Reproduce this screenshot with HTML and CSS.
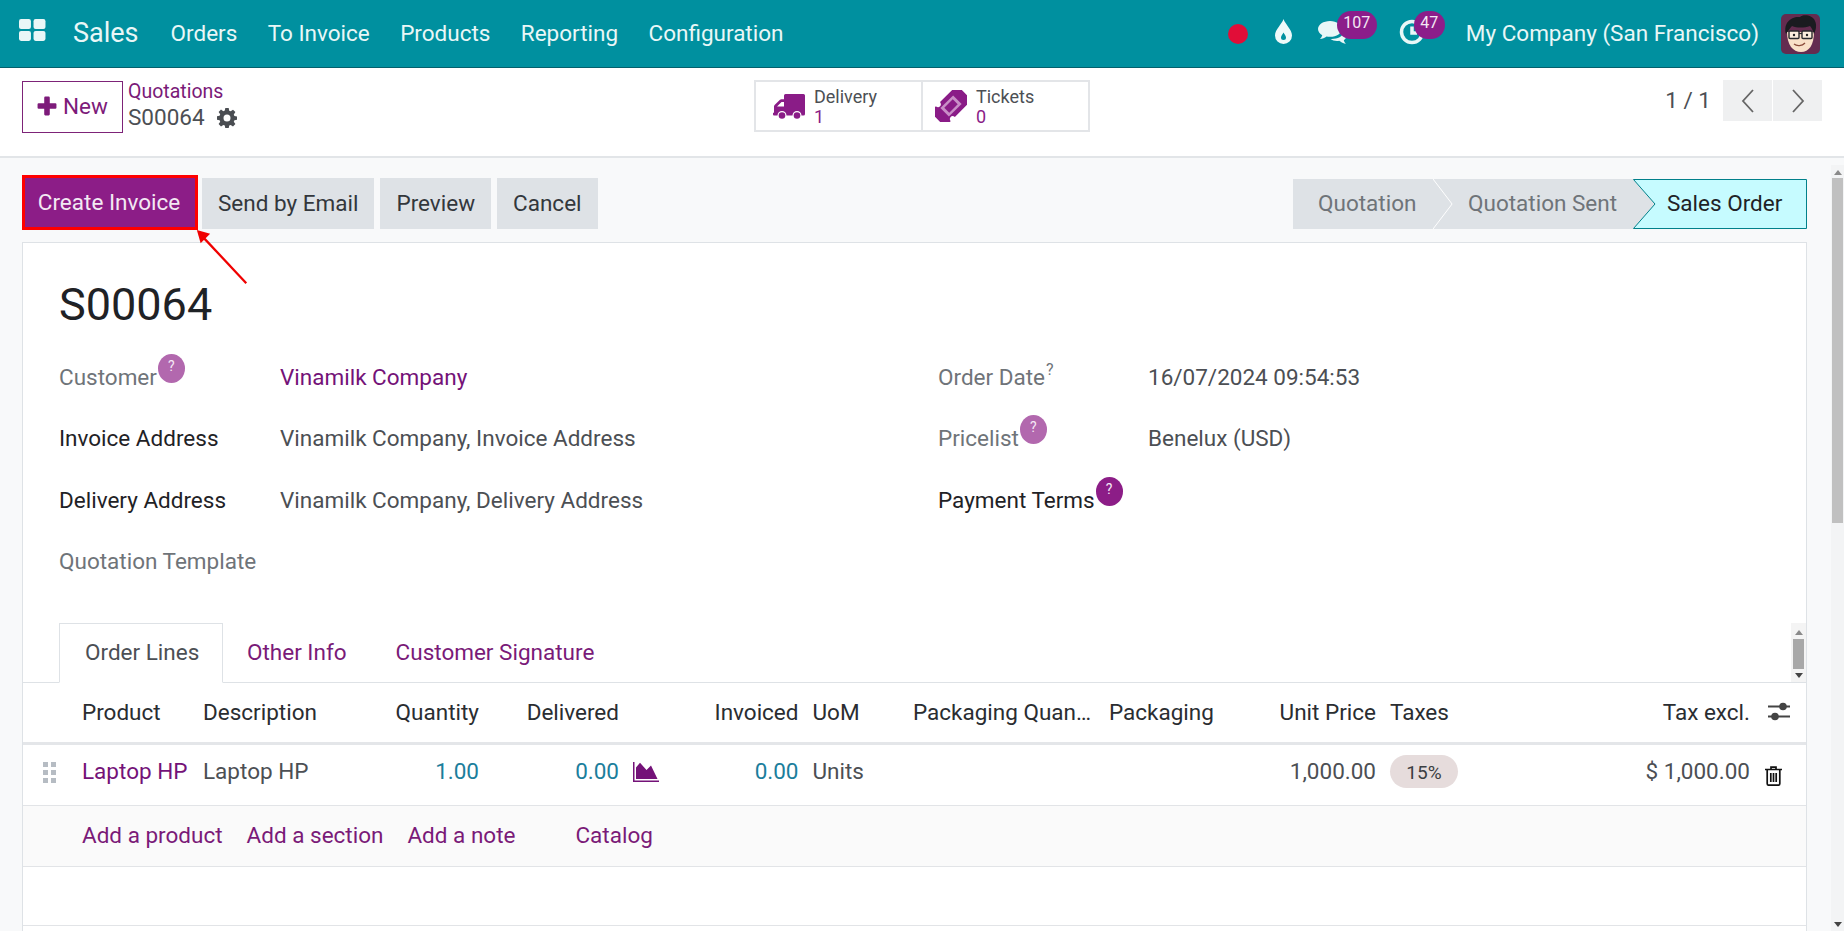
FILE: index.html
```html
<!DOCTYPE html>
<html lang="en">
<head>
<meta charset="utf-8">
<title>S00064 - Sales</title>
<link rel="stylesheet" href="styles.css">
</head>
<body>
<header class="navbar">
  <svg class="apps" viewBox="0 0 26 21"><rect x="0" y="0" width="11.5" height="9.5" rx="2"/><rect x="14" y="0" width="11.5" height="9.5" rx="2"/><rect x="0" y="11.5" width="11.5" height="9.5" rx="2"/><rect x="14" y="11.5" width="11.5" height="9.5" rx="2"/></svg>
  <span class="brand">Sales</span>
  <nav class="menu"><a>Orders</a><a>To Invoice</a><a>Products</a><a>Reporting</a><a>Configuration</a></nav>
  <div class="systray">
    <span class="rec"></span>
    <svg class="drop" viewBox="0 0 17 25"><path d="M8.5 0C10 5 17 10.500 17 16.500A8.500 8.500 0 0 1 0 16.500C0 10.500 7 5 8.500 0Z"/><path class="cut" d="M8.500 13.500c.8 2 2.500 3.200 2.500 5a2.500 2.500 0 0 1-5 0c0-1.800 1.700-3 2.500-5Z"/></svg>
    <span class="tray-item chat">
      <svg class="chat-ico" viewBox="0 0 29 23"><path d="M12 0C5.400 0 0 3.600 0 8c0 2.500 1.700 4.700 4.300 6.200-.4 1.400-1.200 2.600-2.300 3.800 2.400-.3 4.700-1.200 6.500-2.600 1.100.2 2.300.4 3.500.4 6.600 0 12-3.500 12-7.800S18.600 0 12 0Z"/><path d="M25.800 11.500c-1.200 3.700-6 6.500-12 6.500l-1.300-.1c1.600 1.300 3.900 2 6.500 2 .8 0 1.500 0 2.200-.2 1.400 1.100 3.300 2.500 6.800 3.300-1-1-1.900-2.400-2.200-3.800 1.600-1.200 2.700-2.700 2.700-4.500 0-1.100-1-2.100-2.700-3.200Z"/></svg>
      <b class="badge badge-wide">107</b>
    </span>
    <span class="tray-item clock">
      <svg class="clock-ico" viewBox="0 0 26 26"><circle cx="13" cy="13" r="10.500"/><path d="M13 7.500V14H18"/></svg>
      <b class="badge">47</b>
    </span>
    <span class="company">My Company (San Francisco)</span>
    <svg class="avatar" viewBox="0 0 39 40">
      <rect width="39" height="40" rx="5" fill="#642c50"/>
      <path d="M6 18c0 13 6 20 14 20s13-7 13-20Z" fill="#f9e0c8"/>
      <path d="M5 20C2 9 10 2 19 3c3-3 13-2 15 4 2 4 1 9-1 13-1-3-2-6-4-8-6 2-13 2-18 0-2 2-4 5-6 8Z" fill="#1a1b20"/>
      <rect x="8" y="17" width="10" height="7.500" rx="1" fill="#fbeede" stroke="#2a2a2e" stroke-width="1.400"/>
      <rect x="21" y="17" width="10" height="7.500" rx="1" fill="#fbeede" stroke="#2a2a2e" stroke-width="1.400"/>
      <path d="M18 19.500h3" stroke="#2a2a2e" stroke-width="1.200"/>
      <circle cx="13" cy="21" r="1.200" fill="#222"/><circle cx="26" cy="21" r="1.200" fill="#222"/>
      <path d="M13 30c3 2.500 8 2 11-1" fill="none" stroke="#8a4a3a" stroke-width="1.300"/>
    </svg>
  </div>
</header>

<section class="control">
  <div class="control-left">
    <button class="btn-new"><svg class="plus" viewBox="0 0 18 18"><path d="M6.500 1.500a1 1 0 0 1 1-1h3a1 1 0 0 1 1 1v5h5a1 1 0 0 1 1 1v3a1 1 0 0 1-1 1h-5v5a1 1 0 0 1-1 1h-3a1 1 0 0 1-1-1v-5h-5a1 1 0 0 1-1-1v-3a1 1 0 0 1 1-1h5Z"/></svg>New</button>
    <div class="crumbs">
      <a class="crumb-link">Quotations</a>
      <div class="crumb-current">S00064
        <svg class="gear" viewBox="0 0 20 20"><path fill-rule="evenodd" d="M8.300 0h3.400l.5 2.700 1.500.6 2.300-1.600 2.400 2.400-1.600 2.300.6 1.500 2.600.5v3.400l-2.600.5-.6 1.500 1.600 2.300-2.400 2.400-2.300-1.600-1.500.6-.5 2.700H8.300l-.5-2.700-1.500-.6-2.300 1.600-2.400-2.400 1.600-2.300-.6-1.500L0 11.700V8.300l2.600-.5.600-1.500-1.600-2.300 2.400-2.400 2.300 1.600 1.500-.6ZM10 6.500a3.500 3.500 0 1 0 0 7 3.500 3.500 0 0 0 0-7Z"/></svg>
      </div>
    </div>
  </div>
  <div class="stats">
    <a class="stat">
      <svg class="stat-ico truck" viewBox="0 0 32 26"><path d="M11 1.500A1.500 1.500 0 0 1 12.500 0H30.500A1.500 1.500 0 0 1 32 1.500V20a1.500 1.500 0 0 1-1.500 1.500h-2a4.500 4.500 0 0 0-9 0h-6a4.500 4.500 0 0 0-9 0H1a1 1 0 0 1-1-1V19l1-.5v-6c0-.5.200-1 .6-1.400L7 5.800c.4-.4.900-.6 1.400-.6H11ZM4 12.500h7V8H8.500Z" fill-rule="evenodd"/><circle cx="9" cy="21.500" r="3.300"/><circle cx="24" cy="21.500" r="3.300"/></svg>
      <span class="stat-text"><span>Delivery</span><b>1</b></span>
    </a>
    <a class="stat">
      <svg class="stat-ico ticket" viewBox="0 0 32 32"><g transform="rotate(-45 16 16)"><path d="M-3 7.500a2 2 0 0 1 2-2H5c.3 2 1.500 3 3 3s2.700-1 3-3H33a2 2 0 0 1 2 2v17a2 2 0 0 1-2 2H11c-.3-2-1.500-3-3-3s-2.700 1-3 3H-1a2 2 0 0 1-2-2Z"/><rect x="7" y="10" width="18" height="12" fill="#c98fc7"/><rect x="10" y="12.500" width="12" height="7"/></g></svg>
      <span class="stat-text"><span>Tickets</span><b>0</b></span>
    </a>
  </div>
  <div class="pager">
    <span class="pager-count">1 / 1</span>
    <span class="pager-btn"><svg viewBox="0 0 16 26"><path d="M13 2 3 13l10 11"/></svg></span>
    <span class="pager-btn"><svg viewBox="0 0 16 26"><path d="M3 2l10 11L3 24"/></svg></span>
  </div>
</section>

<div class="workspace">
  <main class="content">
    <div class="actions">
      <div class="action-btns">
        <button class="btn primary">Create Invoice</button>
        <button class="btn">Send by Email</button>
        <button class="btn">Preview</button>
        <button class="btn">Cancel</button>
      </div>
      <div class="status">
        <span class="stage s1">Quotation<svg class="chev" viewBox="0 0 22 50" preserveAspectRatio="none"><path d="M0 0 20 25 0 50" fill="#dee2e6" stroke="#fff" stroke-width="1"/></svg></span>
        <span class="stage s2">Quotation Sent</span>
        <span class="stage s3"><svg class="stage-bg" viewBox="0 0 174 50" preserveAspectRatio="none"><path d="M0 0H22V50H0Z" fill="#dee2e6"/><path d="M.5 .5H173.500V49.500H.5L22 25Z" fill="#c6fbff" stroke="#01808a" stroke-width="1"/></svg><span class="stage-label">Sales Order</span></span>
      </div>
    </div>
    <article class="sheet">
      <h1 class="title">S00064</h1>
      <div class="form">
        <div class="col">
          <div class="field"><label class="muted">Customer<i class="help faded">?</i></label><a class="val link">Vinamilk Company</a></div>
          <div class="field"><label>Invoice Address</label><span class="val">Vinamilk Company, Invoice Address</span></div>
          <div class="field"><label>Delivery Address</label><span class="val">Vinamilk Company, Delivery Address</span></div>
          <div class="field"><label class="muted">Quotation Template</label></div>
        </div>
        <div class="col col-right">
          <div class="field"><label class="muted">Order Date<sup class="sup">?</sup></label><span class="val">16/07/2024 09:54:53</span></div>
          <div class="field"><label class="muted">Pricelist<i class="help faded">?</i></label><span class="val">Benelux (USD)</span></div>
          <div class="field"><label>Payment Terms<i class="help">?</i></label></div>
        </div>
      </div>
      <div class="tabs">
        <a class="tab active">Order Lines</a>
        <a class="tab">Other Info</a>
        <a class="tab">Customer Signature</a>
        <div class="mini-scroll"><span class="up"></span><span class="mini-thumb"></span><span class="down"></span></div>
      </div>
      <table class="lines">
        <colgroup>
          <col class="c-handle"><col class="c-product"><col class="c-desc"><col class="c-qty"><col class="c-deliv"><col class="c-chart"><col class="c-inv"><col class="c-uom"><col class="c-pq"><col class="c-pack"><col class="c-price"><col class="c-taxes"><col class="c-sub"><col class="c-opt">
        </colgroup>
        <thead>
          <tr>
            <th></th><th>Product</th><th>Description</th><th class="r">Quantity</th><th class="r">Delivered</th><th></th><th class="r">Invoiced</th><th>UoM</th><th>Packaging Quan…</th><th>Packaging</th><th class="r">Unit Price</th><th>Taxes</th><th class="r">Tax excl.</th>
            <th class="opt"><svg class="sliders" viewBox="0 0 22 19"><path d="M0 4.500H22M0 14.500H22" stroke="#444" stroke-width="1.800"/><circle cx="15" cy="4.500" r="3.800" fill="#444"/><circle cx="7" cy="14.500" r="3.800" fill="#444"/></svg></th>
          </tr>
        </thead>
        <tbody>
          <tr class="line">
            <td class="handle"><svg class="grip" viewBox="0 0 13 21"><rect width="5" height="5"/><rect x="8" width="5" height="5"/><rect y="8" width="5" height="5"/><rect x="8" y="8" width="5" height="5"/><rect y="16" width="5" height="5"/><rect x="8" y="16" width="5" height="5"/></svg></td>
            <td class="link">Laptop HP</td><td>Laptop HP</td><td class="r num">1.00</td><td class="r num">0.00</td>
            <td class="chart"><svg class="area" viewBox="0 0 26 20"><path d="M0 0H1.500V18.500H26V20H0Z"/><path d="M3 17V5.500L7 .8 13.500 8 18 3.500 24.500 17Z"/></svg></td>
            <td class="r num">0.00</td><td>Units</td><td></td><td></td><td class="r">1,000.00</td>
            <td class="tag-cell"><span class="tag">15%</span></td>
            <td class="r">$ 1,000.00</td>
            <td class="opt"><svg class="trash" viewBox="0 0 17 20"><path d="M6 3V1.200h5V3M0 3.500h17M2.200 4v13.500c0 1 .6 1.700 1.500 1.700h9.600c.9 0 1.500-.7 1.500-1.700V4M5.800 7v9M8.500 7v9M11.200 7v9" fill="none" stroke="#111" stroke-width="1.700"/></svg></td>
          </tr>
          <tr class="add">
            <td></td>
            <td colspan="13"><a>Add a product</a><a>Add a section</a><a>Add a note</a><a class="catalog">Catalog</a></td>
          </tr>
          <tr class="blank"><td colspan="14"></td></tr>
        </tbody>
      </table>
    </article>
  </main>
  <aside class="scrollbar"><span class="up"></span><span class="thumb"></span><span class="down"></span></aside>
</div>
<svg class="annotation" viewBox="0 0 60 60"><path d="M55 56 10 8" stroke="#f00000" stroke-width="2.400" fill="none"/><path d="M3 0 17 4 7 14Z" fill="#f00000"/></svg>
</body>
</html>
```
FILE: styles.css
```css
* { box-sizing: border-box; }
html, body { margin: 0; height: 931px; overflow: hidden; }
body {
  font-family: Roboto, "Noto Sans", sans-serif;
  font-size: 22.5px;
  color: #4c4f54;
  background: #fff;
  display: flex;
  flex-direction: column;
  position: relative;
}
a { color: inherit; text-decoration: none; }
button { font: inherit; cursor: pointer; }

/* top bar */
.navbar {
  height: 68px;
  flex: none;
  display: flex;
  align-items: center;
  background: #00909f;
  border-bottom: 1px solid #04606c;
  padding: 0 0 2px 19px;
  color: #e9f7f7;
}
.apps { width: 27px; height: 22px; fill: #e9f7f7; margin-right: 27px; margin-top: -5px; }
.brand { font-size: 27px; margin-right: 32px; }
.menu { display: flex; gap: 30.400px; }
.systray { margin-left: auto; display: flex; align-items: center; padding-right: 24px; }
.rec { width: 20px; height: 20px; border-radius: 50%; background: #e10e38; margin-right: 27px; margin-top: 2px; }
.drop { width: 17px; height: 25px; fill: #eef9f9; margin-right: 26px; margin-top: -2px; }
.drop .cut { fill: #00909f; }
.tray-item { position: relative; display: block; height: 26px; margin-top: 2px; }
.chat { width: 29px; margin-right: 52px; }
.chat-ico { width: 29px; height: 23px; fill: #e9f7f7; display: block; }
.clock { width: 26px; margin-right: 41px; }
.clock-ico { width: 26px; height: 26px; display: block; fill: none; stroke: #e9f7f7; stroke-width: 3.500; margin-top: -2px; }
.badge {
  position: absolute;
  left: 15px;
  top: -10px;
  min-width: 31px;
  height: 28px;
  border-radius: 14px;
  background: #8c1d8a;
  color: #f4e8f4;
  font-weight: 400;
  font-size: 16px;
  line-height: 24px;
  text-align: center;
  padding: 0 3px;
}
.chat .badge { left: 19px; }
.badge-wide { min-width: 40px; }
.company { margin-right: 22px; white-space: nowrap; }
.avatar { width: 39px; height: 40px; margin-top: 2px; }

/* control panel */
.control {
  height: 90px;
  flex: none;
  background: #fff;
  border-bottom: 2px solid #e2e5e8;
  padding: 12px 22px 0;
  display: grid;
  grid-template-columns: 732px 336px 1fr;
  align-items: start;
}
.control-left { display: flex; align-items: flex-start; }
.btn-new {
  width: 101px;
  height: 52px;
  margin-top: 1px;
  background: #fff;
  border: 1px solid #7d2378;
  color: #7d1b7a;
  padding: 0 0 3px;
  display: flex;
  align-items: center;
  justify-content: center;
  gap: 6px;
}
.plus { width: 20px; height: 20px; fill: #7d1b7a; }
.crumbs { margin-left: 5px; line-height: 27px; }
.crumb-link { color: #7a1a78; font-size: 19.500px; display: block; margin-top: -2px; }
.crumb-current { display: flex; align-items: center; gap: 12px; font-size: 22.500px; margin-top: -1px; }
.gear { width: 20px; height: 20px; fill: #4a4d52; }
.stats { display: flex; height: 52px; border: 2px solid #e3e5e8; }
.stat { width: 166px; display: flex; align-items: center; }
.stat + .stat { border-left: 2px solid #e3e5e8; width: 168px; }
.stat-ico { fill: #8a1c87; flex: none; }
.truck { width: 32px; height: 26px; margin-left: 17px; margin-right: 9px; margin-top: 2px; }
.ticket { width: 32px; height: 32px; margin-left: 12px; margin-right: 9px; }
.stat-text { display: flex; flex-direction: column; font-size: 18px; line-height: 20px; margin-top: 2px; }
.stat-text b { font-weight: 400; color: #8a1c87; }
.pager { display: flex; justify-content: flex-end; align-items: center; height: 41px; }
.pager-count { margin-right: 11px; font-size: 22.500px; margin-top: -2px; }
.pager-btn { width: 49px; height: 41px; background: #eff0f1; display: flex; align-items: center; justify-content: center; margin-left: 1px; }
.pager-btn svg { width: 16px; height: 26px; fill: none; stroke: #666; stroke-width: 1.800; }

/* work area */
.workspace { flex: 1; min-height: 0; display: flex; background: #f8f9fa; }
.content { flex: 1; min-width: 0; padding: 20px 24px 0 22px; display: flex; flex-direction: column; }
.actions { display: flex; justify-content: space-between; align-items: flex-start; height: 64px; flex: none; }
.action-btns { display: flex; gap: 6px; align-items: flex-start; }
.btn { height: 51px; border: 0; background: #dee2e6; color: #33373c; padding: 0 16px 2px; white-space: nowrap; }
.btn.primary {
  width: 176px;
  height: 55px;
  margin-top: -3px;
  background: #8c1d87;
  color: #f3e9f3;
  border: 3px solid #f00;
  margin-right: -2px;
  padding: 0 2px 2px 0;
}
.status { display: flex; height: 50px; margin-top: 1px; }
.stage { position: relative; display: flex; align-items: center; background: #dee2e6; color: #6f7479; white-space: nowrap; padding-bottom: 2px; }
.s1 { width: 140px; padding-left: 25px; }
.s2 { width: 200px; padding-left: 35px; }
.s3 { width: 174px; padding-left: 34px; color: #1f2226; background: transparent; }
.chev { position: absolute; left: 100%; top: 0; width: 21px; height: 50px; z-index: 1; }
.stage-bg { position: absolute; left: 0; top: 0; width: 174px; height: 50px; }
.stage-label { position: relative; }

/* sheet */
.sheet {
  flex: 1;
  min-height: 0;
  background: #fff;
  border: 1px solid #dee2e6;
  border-bottom: 0;
  padding-top: 37px;
  overflow: hidden;
}
.title { margin: 0 0 16.500px 36px; height: 50px; line-height: 50px; font-size: 45px; font-weight: 400; color: #1f2226; }
.form { display: grid; grid-template-columns: 879px 1fr; padding-left: 36px; }
.field { height: 61.300px; display: flex; align-items: center; }
.field label { width: 221px; flex: none; color: #1f2226; white-space: nowrap; position: relative; }
.field label.muted { color: #6f7479; }
.col-right .field label { width: 210px; }
.help {
  position: absolute;
  top: -10px;
  margin-left: 1px;
  width: 27px;
  height: 29px;
  border-radius: 50%;
  background: #8c1d87;
  color: #f5e9f5;
  font-style: normal;
  font-size: 14px;
  line-height: 25px;
  text-align: center;
}
.help.faded { background: #b268ae; }
.sup { font-size: 16px; position: absolute; top: -4px; margin-left: 1px; }
.val { white-space: nowrap; }
.link { color: #741278; }
.tabs {
  margin-top: 31.500px;
  height: 60px;
  padding-left: 36px;
  display: flex;
  border-bottom: 1px solid #dee2e6;
  position: relative;
}
.tab { display: flex; align-items: center; padding: 0 24px 2px 23px; color: #7a1a78; height: 60px; border: 1px solid transparent; white-space: nowrap; }
.tab.active { color: #4c4f54; background: #fff; border-color: #dee2e6 #dee2e6 #fff; padding: 0 25px 2px; margin-right: 0; width: 164px; }
.mini-scroll { margin-left: auto; width: 15px; height: 59px; background: #f4f4f4; display: flex; flex-direction: column; align-items: center; justify-content: space-between; padding: 7px 0 4px; }
.mini-thumb { width: 11px; height: 30px; background: #a8a8a8; }
.up, .down { width: 0; height: 0; border-left: 4px solid transparent; border-right: 4px solid transparent; }
.up { border-bottom: 5px solid #8a8a8a; }
.down { border-top: 5px solid #444; }

/* order lines */
.lines { width: 100%; table-layout: fixed; border-collapse: collapse; }
.c-handle { width: 52px; } .c-product { width: 121px; } .c-desc { width: 180px; } .c-qty { width: 110px; }
.c-deliv { width: 140px; } .c-chart { width: 44px; } .c-inv { width: 135.500px; } .c-uom { width: 100.500px; }
.c-pq { width: 196px; } .c-pack { width: 161px; } .c-price { width: 120px; } .c-taxes { width: 240px; }
.c-sub { width: 134px; } .c-opt { width: 49px; }
.lines th, .lines td { padding: 0 7px; white-space: nowrap; font-weight: 400; text-align: left; }
.lines th { height: 60px; color: #2a2d31; border-bottom: 3px solid #e4e6e9; }
.lines .r { text-align: right; }
.line td { height: 62px; padding-bottom: 8px; border-bottom: 1px solid #e2e4e7; }
.num { color: #1b7e9c; }
.handle { text-align: center; }
.grip { width: 13px; height: 21px; fill: #b6bcc3; display: block; margin-left: 13px; margin-top: 3px; }
.lines .chart { padding: 0 0 6px 7px; }
.area { width: 26px; height: 20px; fill: #741278; display: block; }
.lines .tag-cell { padding-bottom: 6px; }
.tag { display: inline-block; height: 33px; line-height: 35px; width: 68px; border-radius: 17px; background: #e6dcdc; text-align: center; font-size: 19px; color: #3b3e42; }
.lines .opt { padding: 0; }
.sliders { width: 22px; height: 19px; display: block; margin-left: 11px; margin-top: -2px; }
.trash { width: 17px; height: 20px; display: block; margin-left: 8px; margin-top: 2px; }
.add td { height: 61px; padding-bottom: 2px; background: #fafafa; border-bottom: 1px solid #e2e4e7; color: #7a1a78; }
.add a { margin-right: 24px; }
.add .catalog { margin-left: 36px; }
.blank td { height: 59px; border-bottom: 1px solid #e2e4e7; }

/* page scrollbar */
.scrollbar { width: 13px; flex: none; margin-top: 7px; background: #f3f4f5; display: flex; flex-direction: column; align-items: center; padding: 5px 0 4px; }
.scrollbar .thumb { width: 11px; height: 345px; background: #c0c0c0; margin-top: 3px; margin-bottom: auto; }

/* red arrow drawn over the screenshot */
.annotation { position: absolute; left: 194px; top: 230px; width: 57px; height: 57px; }
```
